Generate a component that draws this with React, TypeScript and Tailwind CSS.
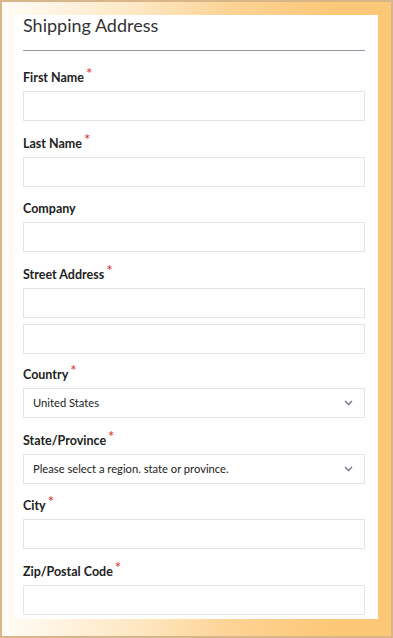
import React from "react";

function Req() {
  return (
    <span className="relative -top-[6px] ml-[2px] text-[15px] font-normal leading-none text-[#e02b27]">*</span>
  );
}

function Label({ text, required }: { text: string; required?: boolean }) {
  return (
    <div className="flex h-[18px] items-end text-[12.5px] font-bold leading-[18px] text-[#222]">
      <span>{text}</span>
      {required && <Req />}
    </div>
  );
}

function Input() {
  return <div className="h-[30px] w-full border border-[#e4e4e4] bg-white" />;
}

function Chevron() {
  return (
    <svg width="9" height="6" viewBox="0 0 9 6" fill="none">
      <path d="M1 1l3.5 3.5L8 1" stroke="#6b7280" strokeWidth="1.3" />
    </svg>
  );
}

function Select({ value }: { value: string }) {
  return (
    <div className="flex h-[30px] w-full items-center justify-between border border-[#e4e4e4] bg-white pl-[9px] pr-[11px]">
      <span className="text-[11.2px] text-[#222]">{value}</span>
      <Chevron />
    </div>
  );
}

function Field({
  label,
  required,
  className,
  children,
}: {
  label: string;
  required?: boolean;
  className?: string;
  children: React.ReactNode;
}) {
  return (
    <div className={"flex flex-col " + (className ?? "")}>
      <Label text={label} required={required} />
      <div className="mt-[4px] flex flex-col gap-[6px]">{children}</div>
    </div>
  );
}

export default function App() {
  return (
    <div
      className="h-[638px] w-[393px] overflow-hidden border-2 border-[#d9b68a] bg-[linear-gradient(to_right,#fffcf6_0%,#fee7c2_35%,#fdd293_60%,#fcc878_85%)] pb-[17px] pl-[13px] pr-[13px] pt-[13px]"
      style={{ fontFamily: "Lato, 'Open Sans', sans-serif" }}
    >
      <div className="h-[604px] overflow-hidden bg-white pl-[8px] pr-[13px]">
        <div className="text-[18px] leading-[20px] text-[#333]">Shipping Address</div>
        <div className="mt-[15px] h-px bg-[#8e98a6]" />
        <div className="mt-[18px] flex flex-col">
          <Field label="First Name" required>
            <Input />
          </Field>
          <Field label="Last Name" required className="mt-[14px]">
            <Input />
          </Field>
          <Field label="Company" className="mt-[13px]">
            <Input />
          </Field>
          <Field label="Street Address" required className="mt-[14px]">
            <Input />
            <Input />
          </Field>
          <Field label="Country" required className="mt-[12px]">
            <Select value="United States" />
          </Field>
          <Field label="State/Province" required className="mt-[14px]">
            <Select value="Please select a region. state or province." />
          </Field>
          <Field label="City" required className="mt-[13px]">
            <Input />
          </Field>
          <Field label="Zip/Postal Code" required className="mt-[14px]">
            <Input />
          </Field>
        </div>
      </div>
    </div>
  );
}
